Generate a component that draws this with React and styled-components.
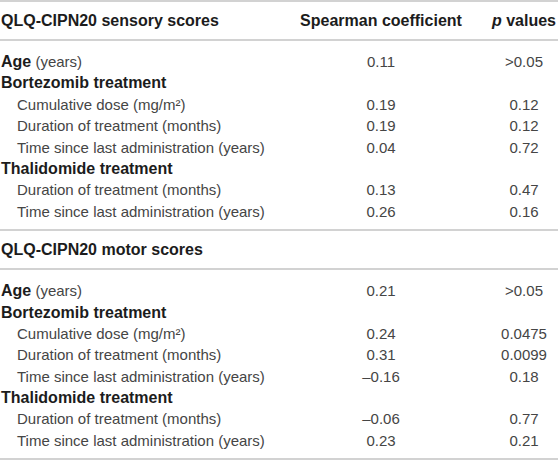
import React from 'react'
import styled, { createGlobalStyle } from 'styled-components'

const GlobalStyle = createGlobalStyle`
  html, body { margin: 0; padding: 0; background: #fff; }
  body { font-family: "Liberation Sans", Arial, sans-serif; }
`

const Table = styled.div`
  width: 558px;
  border-top: 2px solid #d2d2d2;
`

const HeadRow = styled.div`
  display: grid;
  grid-template-columns: 272px 218px 68px;
  align-items: center;
  height: 37px;
  border-bottom: 2px solid #d2d2d2;
  font-size: 16px;
  font-weight: bold;
  color: #1c1c1c;
`

const HeadCell = styled.div`
  text-align: ${p => (p.$center ? 'center' : 'left')};
  white-space: nowrap;
  padding-left: ${p => (p.$center ? '0' : '1px')};
`

const Body = styled.div`
  padding: 10px 0 7px;
  border-bottom: 2px solid #d2d2d2;
`

const Row = styled.div`
  display: grid;
  grid-template-columns: 272px 218px 68px;
  height: 21.4px;
  line-height: 21.4px;
  font-size: 15px;
  color: #454545;
`

const Label = styled.div`
  white-space: nowrap;
  padding-left: ${p => (p.$indent ? '17px' : '1px')};
  font-size: ${p => (p.$bold ? '16px' : '15px')};
  font-weight: ${p => (p.$bold ? 'bold' : 'normal')};
  color: ${p => (p.$bold ? '#1c1c1c' : '#454545')};
`

const Strong = styled.span`
  font-weight: bold;
  font-size: 16px;
  color: #1c1c1c;
`

const Num = styled.div`
  text-align: center;
  white-space: nowrap;
`

const sections = [
  {
    title: 'QLQ-CIPN20 sensory scores',
    rows: [
      { age: true, a: '0.11', b: '>0.05' },
      { group: 'Bortezomib treatment' },
      { label: 'Cumulative dose (mg/m²)', a: '0.19', b: '0.12' },
      { label: 'Duration of treatment (months)', a: '0.19', b: '0.12' },
      { label: 'Time since last administration (years)', a: '0.04', b: '0.72' },
      { group: 'Thalidomide treatment' },
      { label: 'Duration of treatment (months)', a: '0.13', b: '0.47' },
      { label: 'Time since last administration (years)', a: '0.26', b: '0.16' },
    ],
  },
  {
    title: 'QLQ-CIPN20 motor scores',
    rows: [
      { age: true, a: '0.21', b: '>0.05' },
      { group: 'Bortezomib treatment' },
      { label: 'Cumulative dose (mg/m²)', a: '0.24', b: '0.0475' },
      { label: 'Duration of treatment (months)', a: '0.31', b: '0.0099' },
      { label: 'Time since last administration (years)', a: '–0.16', b: '0.18' },
      { group: 'Thalidomide treatment' },
      { label: 'Duration of treatment (months)', a: '–0.06', b: '0.77' },
      { label: 'Time since last administration (years)', a: '0.23', b: '0.21' },
    ],
  },
]

const App = () => {
  return (
    <>
      <GlobalStyle />
      <Table>
        {sections.map((s, si) => (
          <React.Fragment key={si}>
            <HeadRow>
              <HeadCell>{s.title}</HeadCell>
              <HeadCell $center>{si === 0 ? 'Spearman coefficient' : ''}</HeadCell>
              <HeadCell $center>{si === 0 ? <><i>p</i> values</> : ''}</HeadCell>
            </HeadRow>
            <Body>
              {s.rows.map((r, ri) => (
                <Row key={ri}>
                  {r.age ? (
                    <Label><Strong>Age</Strong> (years)</Label>
                  ) : r.group ? (
                    <Label $bold>{r.group}</Label>
                  ) : (
                    <Label $indent>{r.label}</Label>
                  )}
                  <Num>{r.a}</Num>
                  <Num>{r.b}</Num>
                </Row>
              ))}
            </Body>
          </React.Fragment>
        ))}
      </Table>
    </>
  )
}

export default App
